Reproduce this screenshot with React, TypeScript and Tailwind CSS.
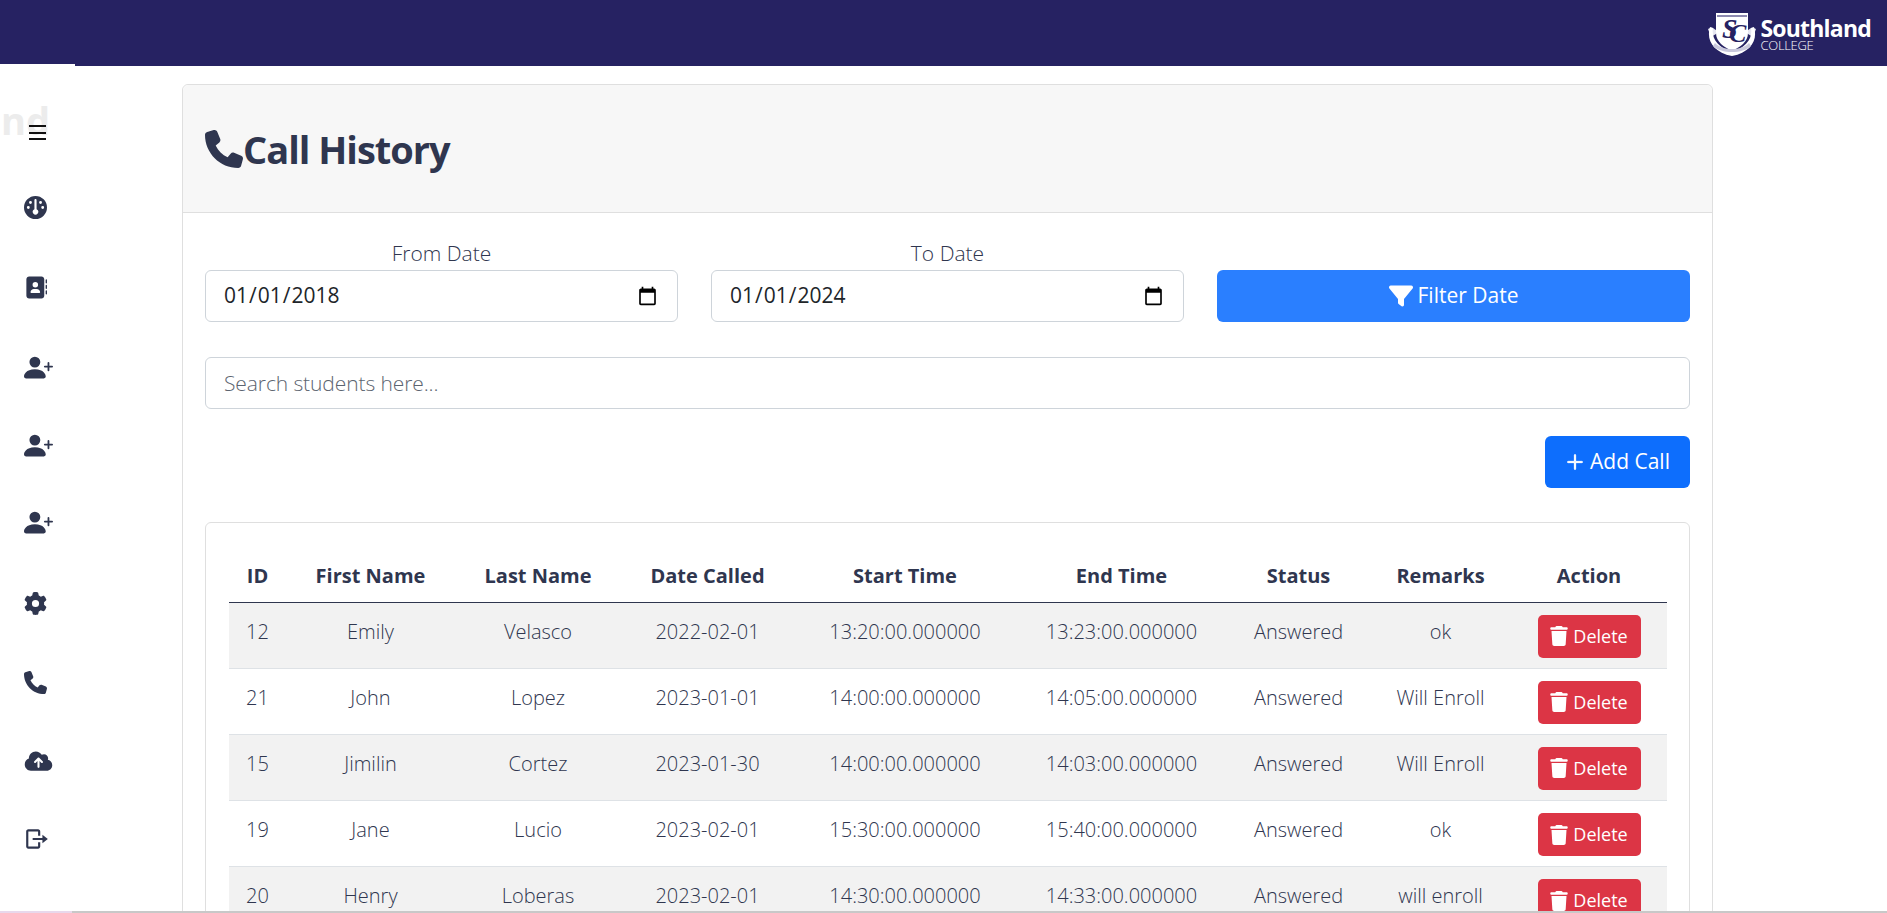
import { BiLogOut } from 'react-icons/bi';
import { BsPersonPlusFill, BsPlusLg } from 'react-icons/bs';
import { FaAddressBook, FaCloudArrowUp, FaFilter, FaGauge, FaGear, FaPhone, FaTrash } from 'react-icons/fa6';

const rows = [
  { id: 12, first: 'Emily', last: 'Velasco', date: '2022-02-01', start: '13:20:00.000000', end: '13:23:00.000000', remarks: 'ok' },
  { id: 21, first: 'John', last: 'Lopez', date: '2023-01-01', start: '14:00:00.000000', end: '14:05:00.000000', remarks: 'Will Enroll' },
  { id: 15, first: 'Jimilin', last: 'Cortez', date: '2023-01-30', start: '14:00:00.000000', end: '14:03:00.000000', remarks: 'Will Enroll' },
  { id: 19, first: 'Jane', last: 'Lucio', date: '2023-02-01', start: '15:30:00.000000', end: '15:40:00.000000', remarks: 'ok' },
  { id: 20, first: 'Henry', last: 'Loberas', date: '2023-02-01', start: '14:30:00.000000', end: '14:33:00.000000', remarks: 'will enroll' },
];

function Crest() {
  return (
    <svg width="48" height="44" viewBox="0 0 48 44" className="shrink-0">
      <path d="M0 17c5-3 6 0 8 1v4l-5 3zM48 17c-5-3-6 0-8 1v4l5 3z" fill="#e6e6f0" />
      <path d="M8 1h32v20c0 9-8 14-16 18C16 35 8 30 8 21z" fill="#fff" />
      <path d="M9 3h30v2H9z" fill="#8d8ab0" />
      <text x="14" y="26" fontFamily="Liberation Serif, serif" fontStyle="italic" fontWeight="700" fontSize="28" fill="#262262">S</text>
      <text x="21" y="30" fontFamily="Liberation Serif, serif" fontStyle="italic" fontWeight="700" fontSize="26" fill="#262262">C</text>
      <path d="M2 15c-4 13 3 25 22 29 19-4 26-16 22-29l-3 1c2 10-5 20-19 24C10 36 3 26 5 16z" fill="#fff" />
      <path d="M7 31c8 8 26 8 34 0l2 3c-8 8-30 8-38 0z" fill="#c9c8dc" />
    </svg>
  );
}

function Th({ className, children }: { className: string; children: string }) {
  return <th className={`h-[57px] px-1 pb-[11px] text-center align-bottom text-[20px] font-bold ${className}`}>{children}</th>;
}

function Td({ children }: { children: React.ReactNode }) {
  return <td className="px-1 pt-[14px] align-top text-center leading-[30px]">{children}</td>;
}

export default function App() {
  return (
    <div className="flex h-screen flex-col overflow-hidden bg-white font-['Open_Sans',sans-serif] text-[20px] text-[#2f364f]">
      <header className="flex h-[66px] shrink-0 items-center justify-end bg-[#262262] pr-[16px]">
        <div className="flex items-center gap-[4px] pt-[1px]">
          <Crest />
          <div className="flex flex-col text-white">
            <span className="text-[23px] leading-[23px] font-bold tracking-[-0.8px]">Southland</span>
            <span className="text-[13px] leading-[10px] font-light tracking-[-0.3px]">COLLEGE</span>
          </div>
        </div>
      </header>

      <div className="flex min-h-0 flex-1">
        <aside className="relative z-10 -mt-[2px] flex h-full w-[75px] shrink-0 flex-col items-start overflow-hidden bg-white pl-[24px]">
          <span className="absolute top-[28px] right-[25px] text-[38px] font-bold whitespace-nowrap text-[#ececec]">Southland</span>
          <div className="relative mt-[60px] ml-[5px] flex h-[17px] w-[17px] flex-col justify-between py-[1px]">
            <span className="h-[2px] bg-[#111]" />
            <span className="h-[2px] bg-[#111]" />
            <span className="h-[2px] bg-[#111]" />
          </div>
          <FaGauge className="mt-[55px] h-[23px] w-[23px]" />
          <FaAddressBook className="mt-[57px] ml-[1px] h-[23px] w-[22px]" />
          <BsPersonPlusFill className="mt-[54px] h-[29px] w-[29px]" />
          <BsPersonPlusFill className="mt-[49px] h-[29px] w-[29px]" />
          <BsPersonPlusFill className="mt-[48px] h-[29px] w-[29px]" />
          <FaGear className="mt-[55px] h-[23px] w-[23px]" />
          <FaPhone className="mt-[56px] h-[23px] w-[23px]" />
          <FaCloudArrowUp className="mt-[56px] h-[22px] w-[29px]" />
          <BiLogOut className="mt-[54px] h-[26px] w-[26px] rotate-180" />
        </aside>

        <main className="min-w-0 flex-1 overflow-hidden pt-[18px] pl-[107px]">
          <section className="w-[1531px] rounded-[6px] border border-[#dfdfdf]">
            <div className="flex h-[128px] items-center gap-0 rounded-t-[6px] border-b border-[#dfdfdf] bg-[#f7f7f7] pl-[22px]">
              <FaPhone className="h-[38px] w-[38px]" />
              <h1 className="mt-[1px] text-[38px] font-bold tracking-[-1px]">Call History</h1>
            </div>

            <div className="px-[22px]">
              <div className="grid grid-cols-3 gap-x-[33px] pt-[23px]">
                <label className="flex flex-col items-center font-light">
                  <span className="text-[21px] leading-[34px]">From Date</span>
                  <input type="date" defaultValue="2018-01-01" className="h-[52px] w-full rounded-[6px] border border-[#ced4da] px-[17px] text-[21px] font-normal text-[#212529]" />
                </label>
                <label className="flex flex-col items-center font-light">
                  <span className="text-[21px] leading-[34px]">To Date</span>
                  <input type="date" defaultValue="2024-01-01" className="h-[52px] w-full rounded-[6px] border border-[#ced4da] px-[17px] text-[21px] font-normal text-[#212529]" />
                </label>
                <button className="mt-[34px] flex h-[52px] items-center justify-center gap-[5px] rounded-[6px] bg-[#2a7fff] text-[21px] text-white">
                  <FaFilter className="h-[24px] w-[24px]" />
                  Filter Date
                </button>
              </div>

              <input placeholder="Search students here..." className="mt-[35px] h-[52px] w-full rounded-[6px] border border-[#ced4da] px-[18px] text-[21px] font-light tracking-[-0.1px] placeholder:text-[#5c6470]" />

              <div className="mt-[27px] flex justify-end">
                <button className="flex h-[52px] w-[145px] items-center justify-center gap-[5px] rounded-[6px] bg-[#0d6efd] text-[21px] text-white">
                  <BsPlusLg className="h-[20px] w-[20px]" stroke="currentColor" strokeWidth={0.8} />
                  Add Call
                </button>
              </div>

              <div className="mt-[34px] rounded-[6px] border border-[#dfdfdf] px-[23px] pt-[22px] pb-[20px]">
                <table className="w-full table-fixed border-collapse">
                  <thead>
                    <tr className="border-b border-[#2f364f]">
                      <Th className="w-[57px]">ID</Th>
                      <Th className="w-[169px]">First Name</Th>
                      <Th className="w-[166px]">Last Name</Th>
                      <Th className="w-[173px]">Date Called</Th>
                      <Th className="w-[222px]">Start Time</Th>
                      <Th className="w-[211px]">End Time</Th>
                      <Th className="w-[143px]">Status</Th>
                      <Th className="w-[141px]">Remarks</Th>
                      <Th className="w-[156px]">Action</Th>
                    </tr>
                  </thead>
                  <tbody className="font-light">
                    {rows.map((r, i) => (
                      <tr key={r.id} className={`h-[66.2px] border-b border-[#dee2e6] ${i % 2 === 0 ? 'bg-[#f2f2f2]' : ''}`}>
                        <Td>{r.id}</Td>
                        <Td>{r.first}</Td>
                        <Td>{r.last}</Td>
                        <Td>{r.date}</Td>
                        <Td>{r.start}</Td>
                        <Td>{r.end}</Td>
                        <Td>Answered</Td>
                        <Td>{r.remarks}</Td>
                        <td className="px-1 pt-[12px] align-top">
                          <button className="mx-auto flex h-[43px] w-[103px] items-center justify-center gap-[5px] rounded-[5px] bg-[#dc3545] text-[18px] font-normal text-white">
                            <FaTrash className="h-[20px] w-[18px]" />
                            Delete
                          </button>
                        </td>
                      </tr>
                    ))}
                  </tbody>
                </table>
              </div>
            </div>
          </section>
        </main>
      </div>

      <div className="flex h-[2px] shrink-0 bg-[#c8c8c8]">
        <div className="w-[72px] bg-[#e8d8ec]" />
      </div>
    </div>
  );
}
